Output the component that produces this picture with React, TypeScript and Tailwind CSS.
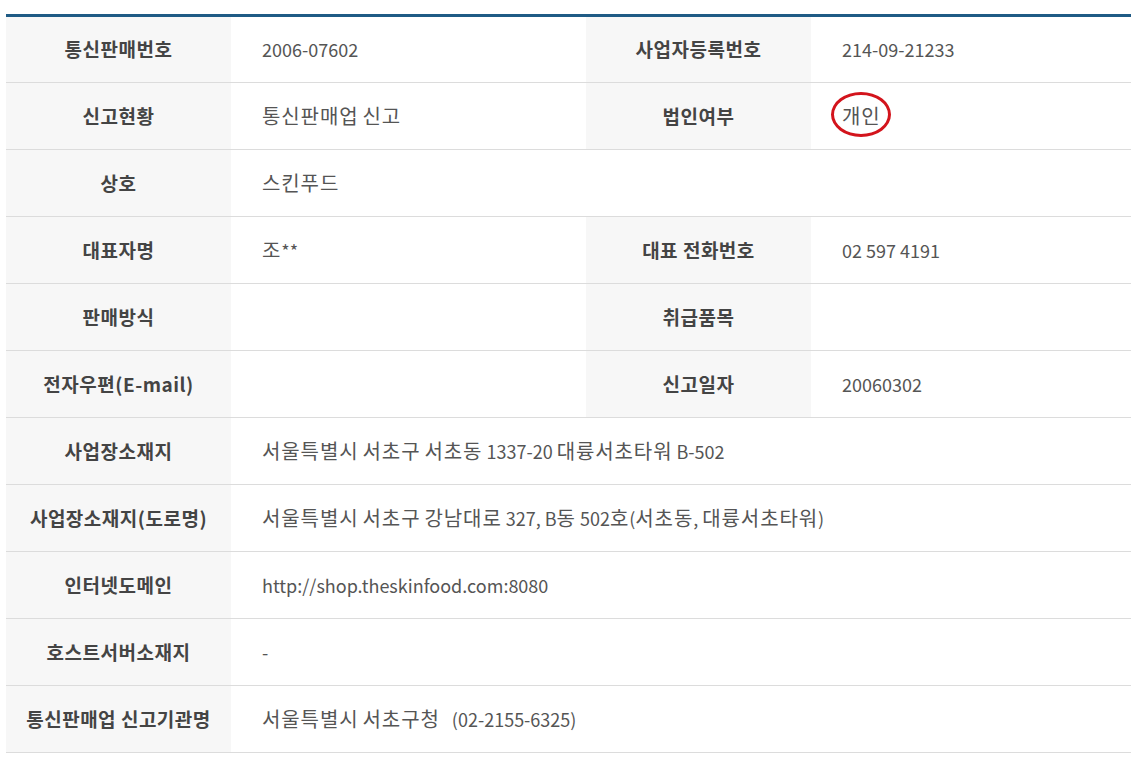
import React from 'react';

type Cell = { label: string; value: string; circled?: boolean };
type Row = Cell[];

const rows: Row[] = [
    [
        { label: '통신판매번호', value: '2006-07602' },
        { label: '사업자등록번호', value: '214-09-21233' },
    ],
    [
        { label: '신고현황', value: '통신판매업 신고' },
        { label: '법인여부', value: '개인', circled: true },
    ],
    [{ label: '상호', value: '스킨푸드' }],
    [
        { label: '대표자명', value: '조**' },
        { label: '대표 전화번호', value: '02 597 4191' },
    ],
    [
        { label: '판매방식', value: '' },
        { label: '취급품목', value: '' },
    ],
    [
        { label: '전자우편(E-mail)', value: '' },
        { label: '신고일자', value: '20060302' },
    ],
    [{ label: '사업장소재지', value: '서울특별시 서초구 서초동 1337-20 대륭서초타워 B-502' }],
    [{ label: '사업장소재지(도로명)', value: '서울특별시 서초구 강남대로 327, B동 502호(서초동, 대륭서초타워)' }],
    [{ label: '인터넷도메인', value: 'http://shop.theskinfood.com:8080' }],
    [{ label: '호스트서버소재지', value: '-' }],
    [{ label: '통신판매업 신고기관명', value: '서울특별시 서초구청\u00a0\u00a0\u00a0(02-2155-6325)' }],
];

// 한글은 조금 크게, 영문/숫자는 조금 작게 (원본 폰트 폭 맞추기)
function MixedText({ text }: { text: string }) {
    const parts = text.split(/([\uAC00-\uD7A3]+)/).filter(Boolean);
    return (
        <>
            {parts.map((p, i) =>
                /[\uAC00-\uD7A3]/.test(p) ? (
                    <span key={i} className="text-[20px] tracking-[0.9px]">
                        {p}
                    </span>
                ) : (
                    <span key={i} className="text-[18px]">
                        {p}
                    </span>
                ),
            )}
        </>
    );
}

export default function App() {
    return (
        <div
            className="min-h-[764px] w-[1142px] bg-white pt-[14px] pl-[6px]"
            style={{ fontFamily: '"Noto Sans CJK KR", "Noto Sans", sans-serif' }}
        >
            <table className="w-[1125px] table-fixed border-collapse border-t-[3px] border-[#1f5b85]">
                <colgroup>
                    <col className="w-[225px]" />
                    <col className="w-[355px]" />
                    <col className="w-[225px]" />
                    <col className="w-[320px]" />
                </colgroup>
                <tbody>
                    {rows.map((row, i) => (
                        <tr key={i} className="h-[67px] border-b border-[#dcdcdc]">
                            {row.map((cell, j) => (
                                <React.Fragment key={j}>
                                    <th className="bg-[#f7f7f7] text-center text-[19px] font-bold tracking-[0.5px] whitespace-nowrap text-[#444]">
                                        {cell.label}
                                    </th>
                                    <td
                                        colSpan={row.length === 1 ? 3 : 1}
                                        className="pl-[31px] text-left text-[19px] whitespace-nowrap text-[#555]"
                                    >
                                        {cell.circled ? (
                                            <span className="relative inline-block">
                                                <MixedText text={cell.value} />
                                                {/* 빨간 동그라미 표시 */}
                                                <span className="absolute left-[-11px] top-[-9px] h-[45px] w-[60px] rounded-[50%] border-[3px] border-[#d3141c]" />
                                            </span>
                                        ) : (
                                            <MixedText text={cell.value} />
                                        )}
                                    </td>
                                </React.Fragment>
                            ))}
                        </tr>
                    ))}
                </tbody>
            </table>
        </div>
    );
}
